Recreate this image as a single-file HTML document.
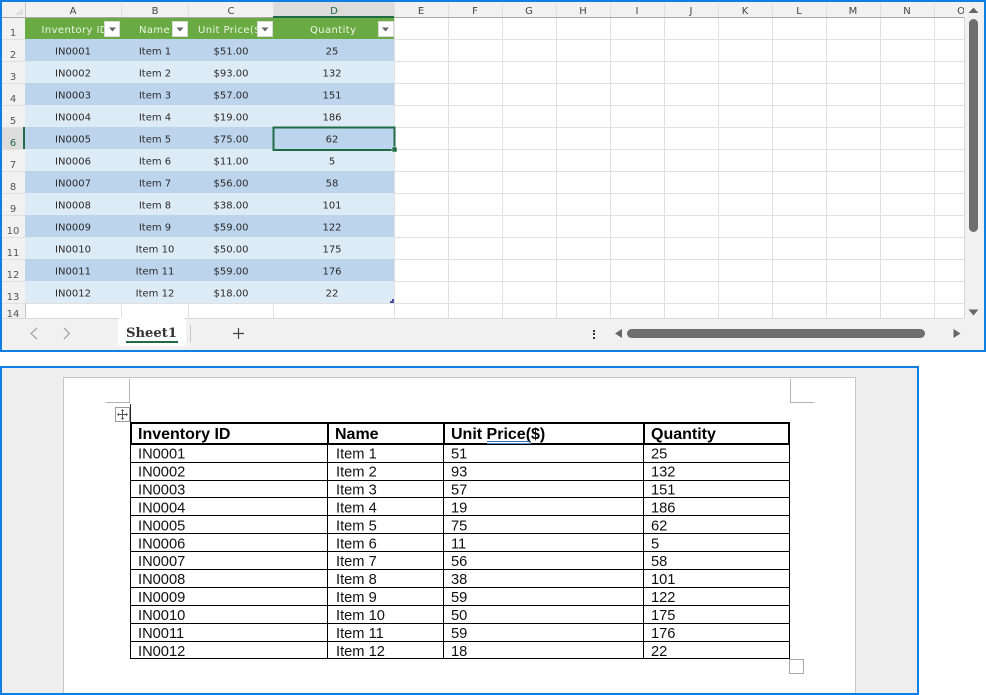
<!DOCTYPE html>
<html><head><meta charset="utf-8"><style>
html,body{margin:0;padding:0;background:#fff;width:986px;height:695px;overflow:hidden}
svg{display:block;font-family:"Liberation Sans",sans-serif}
.t{font-family:"DejaVu Sans","Liberation Sans",sans-serif}
</style></head><body>
<svg width="986" height="695" viewBox="0 0 986 695" xmlns="http://www.w3.org/2000/svg">
<!-- SPREADSHEET -->
<rect x="0" y="0" width="986" height="352" fill="#0f7fe3"/>
<rect x="2" y="2" width="982" height="348" fill="#fff"/>
<rect x="2" y="2" width="982" height="15" fill="#f1f1f1"/>
<rect x="2" y="17" width="23" height="301" fill="#f1f1f1"/>
<rect x="273" y="2" width="121" height="15" fill="#dcdcdc"/>
<rect x="2" y="127" width="23" height="22" fill="#dcdcdc"/>
<path d="M23 8L23 15L15 15Z" fill="#dedede"/>
<!-- grid -->
<g stroke="#e0e0e0" stroke-width="1" shape-rendering="crispEdges">
<path d="M121.500 3V318M188.500 3V318M273.500 3V318M394.500 3V318M448.500 3V318M502.500 3V318M556.500 3V318M610.500 3V318M664.500 3V318M718.500 3V318M772.500 3V318M826.500 3V318M880.500 3V318M934.500 3V318"/>
<path d="M2 39.500H964M2 61.500H964M2 83.500H964M2 105.500H964M2 127.500H964M2 149.500H964M2 171.500H964M2 193.500H964M2 215.500H964M2 237.500H964M2 259.500H964M2 281.500H964M2 303.500H964"/>
</g>
<rect x="2" y="17" width="962" height="1" fill="#a8a8a8"/>
<rect x="25" y="2" width="1" height="316" fill="#c6c6c6"/>
<rect x="273" y="16" width="121" height="2" fill="#1f6b45"/>
<rect x="23" y="127" width="2" height="22" fill="#1f6b45"/>
<!-- table fills -->
<rect x="25" y="18" width="369" height="21" fill="#6aaa42"/>
<g fill="#bcd5ed">
<rect x="25" y="39" width="369" height="22"/><rect x="25" y="83" width="369" height="22"/><rect x="25" y="127" width="369" height="22"/><rect x="25" y="171" width="369" height="22"/><rect x="25" y="215" width="369" height="22"/><rect x="25" y="259" width="369" height="22"/>
</g>
<g fill="#ddebf7">
<rect x="25" y="61" width="369" height="22"/><rect x="25" y="105" width="369" height="22"/><rect x="25" y="149" width="369" height="22"/><rect x="25" y="193" width="369" height="22"/><rect x="25" y="237" width="369" height="22"/><rect x="25" y="281" width="369" height="22"/>
</g>
<path d="M390 303H394V299H392V301H390Z" fill="#4a4aa8"/>
<!-- col letters -->
<g class="t" font-size="10" fill="#444" text-anchor="middle">
<text x="73" y="14">A</text><text x="155" y="14">B</text><text x="231" y="14">C</text><text x="334" y="14" fill="#1f6b45">D</text><text x="421" y="14">E</text><text x="475" y="14">F</text><text x="529" y="14">G</text><text x="583" y="14">H</text><text x="637" y="14">I</text><text x="691" y="14">J</text><text x="745" y="14">K</text><text x="799" y="14">L</text><text x="853" y="14">M</text><text x="907" y="14">N</text>
</g>
<svg x="950" y="2" width="14" height="15"><text class="t" x="11" y="12" font-size="10" fill="#444" text-anchor="middle">O</text></svg>
<!-- row numbers -->
<g class="t" font-size="10" fill="#555" text-anchor="middle">
<text x="13" y="36">1</text><text x="13" y="58">2</text><text x="13" y="80">3</text><text x="13" y="102">4</text><text x="13" y="124">5</text><text x="13" y="146" fill="#1f6b45">6</text><text x="13" y="168">7</text><text x="13" y="190">8</text><text x="13" y="212">9</text><text x="13" y="234">10</text><text x="13" y="256">11</text><text x="13" y="278">12</text><text x="13" y="300">13</text><text x="13" y="317">14</text>
</g>
<!-- header text -->
<g class="t" font-size="10" fill="#eef6e6" letter-spacing=".4">
<text x="41.500" y="33">Inventory ID</text>
<text x="139" y="33">Name</text>
<text x="198" y="33">Unit Price($)</text>
<text x="310" y="33">Quantity</text>
</g>
<!-- filter buttons -->
<g fill="#fff" stroke="#d8d8d8" stroke-width="1" shape-rendering="crispEdges">
<rect x="104.500" y="21.500" width="15" height="15"/><rect x="172.500" y="21.500" width="15" height="15"/><rect x="257.500" y="21.500" width="15" height="15"/><rect x="378.500" y="21.500" width="15" height="15"/>
</g>
<g fill="#666">
<path d="M109 27.500H116L112.500 31.500Z"/><path d="M176.500 27.500H183.500L180 31.500Z"/><path d="M261.500 27.500H268.500L265 31.500Z"/><path d="M382 27.500H389L385.500 31.500Z"/>
</g>
<!-- data -->
<g class="t" font-size="10" fill="#2a2a2a" text-anchor="middle">
<text x="73" y="54.500">IN0001</text><text x="155" y="54.500">Item 1</text><text x="231" y="54.500">$51.00</text><text x="332" y="54.500">25</text>
<text x="73" y="76.500">IN0002</text><text x="155" y="76.500">Item 2</text><text x="231" y="76.500">$93.00</text><text x="332" y="76.500">132</text>
<text x="73" y="98.500">IN0003</text><text x="155" y="98.500">Item 3</text><text x="231" y="98.500">$57.00</text><text x="332" y="98.500">151</text>
<text x="73" y="120.500">IN0004</text><text x="155" y="120.500">Item 4</text><text x="231" y="120.500">$19.00</text><text x="332" y="120.500">186</text>
<text x="73" y="142.500">IN0005</text><text x="155" y="142.500">Item 5</text><text x="231" y="142.500">$75.00</text><text x="332" y="142.500">62</text>
<text x="73" y="164.500">IN0006</text><text x="155" y="164.500">Item 6</text><text x="231" y="164.500">$11.00</text><text x="332" y="164.500">5</text>
<text x="73" y="186.500">IN0007</text><text x="155" y="186.500">Item 7</text><text x="231" y="186.500">$56.00</text><text x="332" y="186.500">58</text>
<text x="73" y="208.500">IN0008</text><text x="155" y="208.500">Item 8</text><text x="231" y="208.500">$38.00</text><text x="332" y="208.500">101</text>
<text x="73" y="230.500">IN0009</text><text x="155" y="230.500">Item 9</text><text x="231" y="230.500">$59.00</text><text x="332" y="230.500">122</text>
<text x="73" y="252.500">IN0010</text><text x="155" y="252.500">Item 10</text><text x="231" y="252.500">$50.00</text><text x="332" y="252.500">175</text>
<text x="73" y="274.500">IN0011</text><text x="155" y="274.500">Item 11</text><text x="231" y="274.500">$59.00</text><text x="332" y="274.500">176</text>
<text x="73" y="296.500">IN0012</text><text x="155" y="296.500">Item 12</text><text x="231" y="296.500">$18.00</text><text x="332" y="296.500">22</text>
</g>
<!-- selection -->
<rect x="273.500" y="127.500" width="121" height="22.500" fill="none" stroke="#1f6b45" stroke-width="2"/>
<rect x="392" y="147" width="5" height="5" fill="#1f6b45" stroke="#fff" stroke-width=".5"/>
<!-- v scrollbar -->
<rect x="964" y="2" width="20" height="316" fill="#f1f1f1"/>
<rect x="964" y="17" width="1" height="301" fill="#d6d6d6"/>
<path d="M973.500 7.500L978.500 13H968.500Z" fill="#666"/>
<rect x="969" y="19" width="9" height="213" rx="4.500" fill="#6e6e6e"/>
<path d="M968.500 309.500H978.500L973.500 315.500Z" fill="#666"/>
<!-- tab bar -->
<rect x="2" y="318" width="982" height="32" fill="#f1f1f1"/>
<rect x="2" y="318" width="962" height="1" fill="#d8d8d8"/>
<path d="M121 318H183Q186 318 186 321V343Q186 346 183 346H121Q118 346 118 343V321Q118 318 121 318Z" fill="#fff"/>
<text x="126" y="337" font-family="'DejaVu Serif',serif" font-weight="700" font-size="13" fill="#333" textLength="51" lengthAdjust="spacingAndGlyphs">Sheet1</text>
<rect x="126" y="341" width="52" height="2" fill="#1f6b45"/>
<rect x="190" y="325" width="1" height="17" fill="#c8c8c8"/>
<path d="M37 328L31 333.500L37 339" fill="none" stroke="#a6a6a6" stroke-width="1.300"/>
<path d="M64 328L69.500 333.500L64 339" fill="none" stroke="#a6a6a6" stroke-width="1.300"/>
<path d="M238.500 328V339M233 333.500H244" stroke="#444" stroke-width="1.200" fill="none"/>
<g fill="#333"><rect x="593" y="330" width="2" height="2"/><rect x="593" y="333" width="2" height="2"/><rect x="593" y="337" width="2" height="2"/></g>
<path d="M615 333.500L622 329V338Z" fill="#666"/>
<rect x="627" y="329" width="298" height="9" rx="4.500" fill="#6e6e6e"/>
<path d="M960.500 333.500L953.500 329V338Z" fill="#666"/>
<!-- DOCUMENT -->
<rect x="0" y="366" width="919" height="329" fill="#0f7fe3"/>
<rect x="2" y="368" width="915" height="325" fill="#eeeeee"/>
<rect x="63.500" y="377.500" width="792" height="320" fill="#fff" stroke="#c6c6c6"/>
<path d="M129.500 379V402.500H106M790.500 379V402.500H814" fill="none" stroke="#b4b4b4" shape-rendering="crispEdges"/>
<!-- move handle -->
<rect x="115.500" y="407.500" width="14" height="14" fill="#fff" stroke="#9a9a9a" shape-rendering="crispEdges"/>
<path d="M122.500 410V419M118 414.500H127" stroke="#555" stroke-width="1" fill="none"/>
<path d="M122.500 409L120.800 411H124.200ZM122.500 420L120.800 418H124.200ZM117 414.500L119 412.800V416.200ZM128 414.500L126 412.800V416.200Z" fill="#555"/>
<rect x="130" y="404" width="1" height="19" fill="#222"/>
<!-- resize handle -->
<rect x="789.500" y="659.500" width="14" height="14" fill="#fff" stroke="#aaa" shape-rendering="crispEdges"/>
<!-- table lines -->
<g fill="#000" shape-rendering="crispEdges">
<rect x="130" y="422" width="660" height="2"/><rect x="130" y="443" width="660" height="2"/>
<rect x="130" y="422" width="2" height="23"/><rect x="327" y="422" width="2" height="23"/><rect x="443" y="422" width="2" height="23"/><rect x="643" y="422" width="2" height="23"/><rect x="788" y="422" width="2" height="23"/>
<rect x="130" y="445" width="1" height="214"/><rect x="327" y="445" width="1" height="214"/><rect x="443" y="445" width="1" height="214"/><rect x="643" y="445" width="1" height="214"/><rect x="789" y="445" width="1" height="214"/>
<rect x="130" y="462" width="660" height="1"/><rect x="130" y="480" width="660" height="1"/><rect x="130" y="497" width="660" height="1"/><rect x="130" y="515" width="660" height="1"/><rect x="130" y="533" width="660" height="1"/><rect x="130" y="551" width="660" height="1"/><rect x="130" y="569" width="660" height="1"/><rect x="130" y="587" width="660" height="1"/><rect x="130" y="605" width="660" height="1"/><rect x="130" y="623" width="660" height="1"/><rect x="130" y="641" width="660" height="1"/><rect x="130" y="658" width="660" height="1"/>
</g>
<g font-size="16" font-weight="700" fill="#000">
<text x="138" y="439">Inventory ID</text><text x="335" y="439">Name</text><text x="451" y="439">Unit Price($)</text><text x="651" y="439">Quantity</text>
</g>
<rect x="487" y="441" width="44" height="1" fill="#3b6fb5"/>
<rect x="487" y="443" width="44" height="1" fill="#5b8fc9"/>
<g font-size="14.670" fill="#111">
<text x="138" y="458.500">IN0001</text><text x="336" y="458.500">Item 1</text><text x="451" y="458.500">51</text><text x="651" y="458.500">25</text>
<text x="138" y="476.500">IN0002</text><text x="336" y="476.500">Item 2</text><text x="451" y="476.500">93</text><text x="651" y="476.500">132</text>
<text x="138" y="494.500">IN0003</text><text x="336" y="494.500">Item 3</text><text x="451" y="494.500">57</text><text x="651" y="494.500">151</text>
<text x="138" y="512.500">IN0004</text><text x="336" y="512.500">Item 4</text><text x="451" y="512.500">19</text><text x="651" y="512.500">186</text>
<text x="138" y="530.500">IN0005</text><text x="336" y="530.500">Item 5</text><text x="451" y="530.500">75</text><text x="651" y="530.500">62</text>
<text x="138" y="548.500">IN0006</text><text x="336" y="548.500">Item 6</text><text x="451" y="548.500">11</text><text x="651" y="548.500">5</text>
<text x="138" y="566">IN0007</text><text x="336" y="566">Item 7</text><text x="451" y="566">56</text><text x="651" y="566">58</text>
<text x="138" y="584">IN0008</text><text x="336" y="584">Item 8</text><text x="451" y="584">38</text><text x="651" y="584">101</text>
<text x="138" y="602">IN0009</text><text x="336" y="602">Item 9</text><text x="451" y="602">59</text><text x="651" y="602">122</text>
<text x="138" y="620">IN0010</text><text x="336" y="620">Item 10</text><text x="451" y="620">50</text><text x="651" y="620">175</text>
<text x="138" y="638">IN0011</text><text x="336" y="638">Item 11</text><text x="451" y="638">59</text><text x="651" y="638">176</text>
<text x="138" y="656">IN0012</text><text x="336" y="656">Item 12</text><text x="451" y="656">18</text><text x="651" y="656">22</text>
</g>
<!-- re-assert doc bottom border -->
<rect x="0" y="693" width="919" height="2" fill="#0f7fe3"/>
</svg>
</body></html>
